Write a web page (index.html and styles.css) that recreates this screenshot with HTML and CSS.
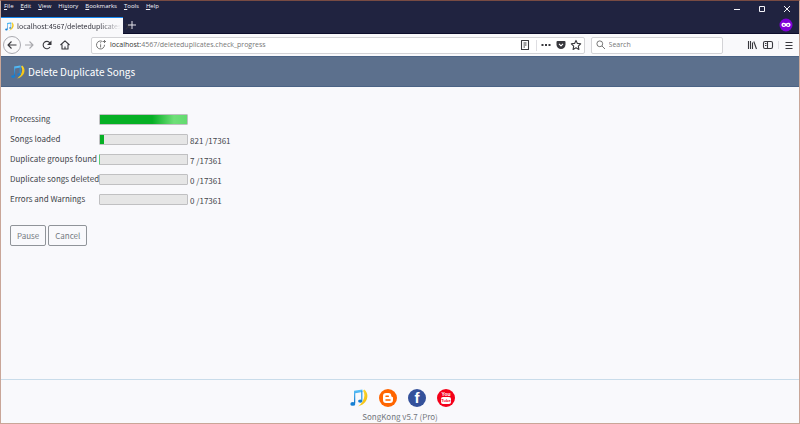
FILE: index.html
```html
<!DOCTYPE html>
<html lang="en">
<head>
<meta charset="utf-8">
<title>Delete Duplicate Songs</title>
<link rel="stylesheet" href="styles.css">
</head>
<body>
<svg width="0" height="0" class="defs" aria-hidden="true">
  <defs>
    <linearGradient id="blue" x1="0" y1="0" x2="0" y2="1"><stop offset="0" stop-color="#5cc4fb"/><stop offset="1" stop-color="#0d72c8"/></linearGradient>
    <linearGradient id="gold" x1="0" y1="0" x2="1" y2="1"><stop offset="0" stop-color="#ffe94a"/><stop offset="1" stop-color="#f1b500"/></linearGradient>
    <symbol id="note" viewBox="2 2 29 29">
      <path d="M25 3C34 10 31 26 15 30C24 23 28 13 23 5Z" fill="url(#gold)"/>
      <path d="M8.500 5L22 3V7L10.500 9V25H8.500Z" fill="url(#blue)"/>
      <path d="M20 5H22V21H20Z" fill="#2e9be6"/>
      <ellipse cx="6.500" cy="26" rx="4" ry="3" fill="#1680d4"/>
      <ellipse cx="18.500" cy="21.500" rx="3.500" ry="2.500" fill="#1680d4"/>
    </symbol>
  </defs>
</svg>
<div class="window">
  <header class="chrome">
    <div class="menubar">
      <nav class="menus">
        <button><u>F</u>ile</button><button><u>E</u>dit</button><button><u>V</u>iew</button><button>Hi<u>s</u>tory</button><button><u>B</u>ookmarks</button><button><u>T</u>ools</button><button><u>H</u>elp</button>
      </nav>
      <div class="controls">
        <button aria-label="Minimize"><svg viewBox="0 0 8 8"><path d="M1 4.500H7"/></svg></button>
        <button aria-label="Maximize"><svg viewBox="0 0 8 8"><path d="M1.500 1.500H6.500V6.500H1.500Z"/></svg></button>
        <button aria-label="Close"><svg viewBox="0 0 8 8"><path d="M1 1L7 7M7 1L1 7"/></svg></button>
      </div>
    </div>
    <div class="tabs">
      <div class="tab">
        <svg class="favicon" aria-hidden="true"><use href="#note"/></svg>
        <span class="tab-title">localhost:4567/deleteduplicates</span>
        <button aria-label="Close tab"><svg viewBox="0 0 8 8"><path d="M1.500 1.500L6.500 6.500M6.500 1.500L1.500 6.500"/></svg></button>
      </div>
      <button class="new-tab" aria-label="New tab"><svg viewBox="0 0 8 8"><path d="M4 0V8M0 4H8"/></svg></button>
      <svg class="private" viewBox="0 0 14 14" aria-hidden="true"><circle cx="7" cy="7" r="6.500" fill="#8000d7"/><path d="M2.500 6.500C2.500 4.500 5.500 4.500 7 5.500C8.500 4.500 11.500 4.500 11.500 6.500C11.500 9.500 8.500 9.500 7 8C5.500 9.500 2.500 9.500 2.500 6.500Z" fill="#fff"/><path d="M4.500 7H5.200M8.800 7H9.500" stroke="#8000d7" stroke-width="1.300" stroke-linecap="round"/></svg>
    </div>
    <div class="toolbar">
      <div class="navigation">
        <button class="back" aria-label="Back"><svg viewBox="0 0 12 12"><path d="M10.500 6H2M5.500 2.500L2 6L5.500 9.500"/></svg></button>
        <button class="forward" aria-label="Forward"><svg viewBox="0 0 12 12"><path d="M2 6H10M6.500 2.500L10 6L6.500 9.500"/></svg></button>
        <button aria-label="Reload"><svg viewBox="0 0 12 12"><path d="M9 8A3.700 3.700 0 1 1 8.800 3.800"/><path class="solid" d="M10.500 1.500V6H6Z"/></svg></button>
        <button aria-label="Home"><svg viewBox="0 0 12 12"><path d="M1.500 6L6 1.800L10.500 6M3 5.500V10H9V5.500M6 10V7.500"/></svg></button>
      </div>
      <div class="field address">
        <button aria-label="Site information"><svg class="muted" viewBox="0 0 12 12"><path d="M7.500 2.500A4 4 0 1 0 9.500 5.800M5.600 5.300V8.500M5.600 3.300V4.300M9.500 1V4M8 2.500H11"/></svg></button>
        <label class="url"><span class="host">localhost:</span><input aria-label="Address" value="4567/deleteduplicates.check_progress"></label>
        <button class="reader" aria-label="Reader view"><svg viewBox="0 0 12 12"><path d="M2.500 1.500H9.500V10.500H2.500ZM4.500 4H7.500M4.500 6H7.500M4.500 8H6"/></svg></button>
        <span class="rule"></span>
        <button class="more" aria-label="Page actions"><svg viewBox="0 0 12 12"><path class="solid" d="M1.500 5H3.500V7H1.500ZM5 5H7V7H5ZM8.500 5H10.500V7H8.500Z"/></svg></button>
        <button aria-label="Pocket"><svg viewBox="0 0 12 12"><path class="solid" d="M2.500 2H9.500Q10.500 2 10.500 3V5.500A4.500 4.500 0 0 1 1.500 5.500V3Q1.500 2 2.500 2Z"/><path class="light" d="M4 4.800L6 6.800L8 4.800"/></svg></button>
        <button aria-label="Bookmark"><svg viewBox="0 0 12 12"><path d="M6 1.400L7.400 4.400L10.700 4.800L8.300 7.100L8.900 10.400L6 8.800L3.100 10.400L3.700 7.100L1.300 4.800L4.600 4.400Z"/></svg></button>
      </div>
      <div class="field search">
        <svg class="muted" viewBox="0 0 12 12" aria-hidden="true"><path d="M7 7L10 10M7.700 4.800A2.900 2.900 0 1 1 1.900 4.800A2.900 2.900 0 1 1 7.700 4.800"/></svg>
        <input aria-label="Search" placeholder="Search">
      </div>
      <div class="tools">
        <button aria-label="Library"><svg viewBox="0 0 12 12"><path d="M2.500 2V10M4.500 2V10M6.500 3.500V10M7.800 2.500L10.500 10"/></svg></button>
        <button aria-label="Sidebars"><svg viewBox="0 0 12 12"><path d="M3 2.500H9Q10.500 2.500 10.500 4V8Q10.500 9.500 9 9.500H3Q1.500 9.500 1.500 8V4Q1.500 2.500 3 2.500ZM5.500 2.500V9.500M3 4.500H4.500M3 6.500H4.500"/></svg></button>
        <span class="rule"></span>
        <button aria-label="Open menu"><svg viewBox="0 0 12 12"><path d="M2.500 3.500H9.500M2.500 6.500H9.500M2.500 9.500H9.500"/></svg></button>
      </div>
    </div>
  </header>
  <div class="banner">
    <svg aria-hidden="true"><use href="#note"/></svg>
    <h1>Delete Duplicate Songs</h1>
  </div>
  <main>
    <table>
      <tr><th scope="row"><label for="p1">Processing</label></th><td><progress id="p1" class="busy" value="1" max="1"></progress></td><td></td></tr>
      <tr><th scope="row"><label for="p2">Songs loaded</label></th><td><progress id="p2" value="821" max="17361"></progress></td><td class="count">821 /17361</td></tr>
      <tr><th scope="row"><label for="p3">Duplicate groups found</label></th><td><progress id="p3" class="trace" value="7" max="17361"></progress></td><td class="count">7 /17361</td></tr>
      <tr><th scope="row"><label for="p4">Duplicate songs deleted</label></th><td><progress id="p4" value="0" max="17361"></progress></td><td class="count">0 /17361</td></tr>
      <tr><th scope="row"><label for="p5">Errors and Warnings</label></th><td><progress id="p5" value="0" max="17361"></progress></td><td class="count">0 /17361</td></tr>
    </table>
    <div class="actions"><button>Pause</button><button>Cancel</button></div>
  </main>
  <footer>
    <div class="links">
      <a href="#" aria-label="SongKong"><svg><use href="#note"/></svg></a>
      <a href="#" aria-label="Blog"><svg viewBox="0 0 18 18"><circle cx="9" cy="9" r="9" fill="#ff6500"/><path d="M7 4H9.500Q12.300 4 12.300 7Q12.500 8 13.500 8Q14 8 14 9V11Q14 14 11 14H7Q4 14 4 11V7Q4 4 7 4Z" fill="#fff"/><path d="M7 7.200H9.300M7 10.900H11" stroke="#ff6500" stroke-width="1.500" stroke-linecap="round"/></svg></a>
      <a href="#" aria-label="Facebook"><svg viewBox="0 0 18 18"><circle cx="9" cy="9" r="9" fill="#34519b"/><text class="facebook" x="9" y="14">f</text></svg></a>
      <a href="#" aria-label="YouTube"><svg viewBox="0 0 18 18"><circle cx="9" cy="9" r="9" fill="#f40019"/><text class="youtube" x="9" y="7">You</text><rect x="4" y="8" width="10" height="7" rx="2" fill="#fff"/><text class="youtube tube" x="9" y="13">Tube</text></svg></a>
    </div>
    <p>SongKong v5.7 (Pro)</p>
  </footer>
</div>
</body>
</html>
```
FILE: styles.css
```css
* { box-sizing: border-box; }
body { margin: 0; background: #f9f9fc; color: #41444a; font: 8px/12px "Noto Sans CJK SC", "Open Sans", sans-serif; }
button, input { font: inherit; color: inherit; margin: 0; padding: 0; border: 0; background: none; }
svg { display: block; flex: none; fill: none; stroke-linejoin: round; }
.defs { position: absolute; }
.window { min-height: 100vh; display: flex; flex-direction: column; border: 1px solid #c9a698; border-top-color: #784b43; }
.chrome { font-family: "Open Sans", sans-serif; font-size: 7px; }
.chrome button { display: flex; align-items: center; justify-content: center; }
.chrome button svg { stroke: currentColor; }
.menubar { height: 16px; display: flex; justify-content: space-between; background: #202340; color: #f4f4fa; font-size: 6px; line-height: 10px; }
.menus { display: flex; gap: 7px; padding-left: 3px; align-items: flex-start; }
.menus button { display: block; }
.controls { display: flex; padding-right: 8px; gap: 17px; }
.controls svg { width: 8px; height: 8px; }
.controls button { align-self: center; }
.tabs { height: 17px; display: flex; align-items: center; background: #202340; border-bottom: 1px solid #0c0d2b; }
.tab { align-self: stretch; width: 122px; margin-bottom: -1px; padding: 0 5px 0 4px; display: flex; align-items: center; gap: 3px; background: #f9f9fb; border-top: 1px solid #1588f0; color: #33333d; font-family: "Noto Sans CJK SC", sans-serif; }
.tab-title { flex: 1; white-space: nowrap; mask-image: linear-gradient(to right, #000 80%, transparent); }
.tab svg { width: 9px; height: 9px; }
.new-tab { margin-left: 5px; color: #e4e4ec; }
.new-tab svg { width: 8px; height: 8px; }
.private { width: 14px; height: 14px; margin: 0 6px 0 auto; }
.toolbar { height: 22px; display: flex; align-items: center; background: #f9f9fb; color: #38383d; }
.toolbar svg { width: 12px; height: 12px; stroke: currentColor; stroke-width: 1.1; }
.toolbar .solid { fill: currentColor; stroke: none; }
.toolbar .light { stroke: #fff; }
.toolbar .muted { color: #777; stroke-width: 1; }
.navigation { width: 90px; display: flex; align-items: center; gap: 6px; padding-left: 2px; }
.back { width: 18px; height: 18px; border: 1px solid #aaaab0; border-radius: 50%; }
.forward { color: #a9a9ad; }
.navigation .forward { margin-left: -4px; }
.field { height: 17px; display: flex; align-items: center; gap: 3px; padding: 0 2px 0 3px; background: #fff; border: 1px solid #d3d3d6; border-radius: 2px; }
.address { flex: 485; }
.search { flex: 125; min-width: 0; margin-left: 6px; padding-left: 3px; gap: 2px; }
.search input { min-width: 0; }
.search input::placeholder { color: #777; opacity: 1; }
.url { flex: 1; display: flex; }
.url input { flex: 1; color: #777; }
.host { color: #333; }
.reader { margin-right: 2px; }
.rule { align-self: stretch; width: 1px; margin: 2px 0; background: #dedee2; }
.tools { width: 76px; display: flex; align-items: center; justify-content: flex-end; gap: 4px; padding-right: 4px; }
.banner { height: 31px; display: flex; align-items: center; gap: 3px; padding: 0 10px; background: #5c708d; border: solid #4b6385; border-width: 1px 0; color: #fff; }
.banner svg { width: 14px; height: 14px; }
h1 { margin: 0; font-size: 10px; line-height: 16px; font-weight: 400; }
main { flex: 1; padding: 22px 9px; }
table { border-collapse: collapse; }
tr { height: 20px; }
th, td { padding: 0; text-align: left; font-weight: 400; }
th { min-width: 89px; white-space: nowrap; }
.count { padding: 4px 0 0 2px; }
progress { display: block; width: 89px; height: 11px; appearance: none; border: 1px solid #c0c0c2; border-radius: 1px; background: #e6e6e6; }
progress::-webkit-progress-bar { background: #e6e6e6; }
progress::-webkit-progress-value { background: #06b025; }
.busy::-webkit-progress-value { background: linear-gradient(to right, #06b025 60%, #6fdf78 85%, #63db70); }
.trace { border-left-color: #5fce76; }
.actions { display: flex; gap: 2px; margin-top: 16px; }
.actions button { height: 21px; padding: 0 6px; border: 1px solid #909499; border-radius: 2px; color: #747a81; }
footer { padding: 9px 0 0; border-top: 1px solid #c9dcea; text-align: center; color: #73777c; }
.links { display: flex; justify-content: center; gap: 11px; padding-left: 4px; }
.links svg { width: 18px; height: 18px; }
.links text { fill: #fff; text-anchor: middle; font-family: "Liberation Sans", sans-serif; font-weight: 700; }
.links .facebook { font-size: 15px; }
.links .youtube { font-size: 5px; }
.links .tube { font-size: 4px; fill: #f40019; }
footer p { margin: 3px 0 0; line-height: 13px; }
```
